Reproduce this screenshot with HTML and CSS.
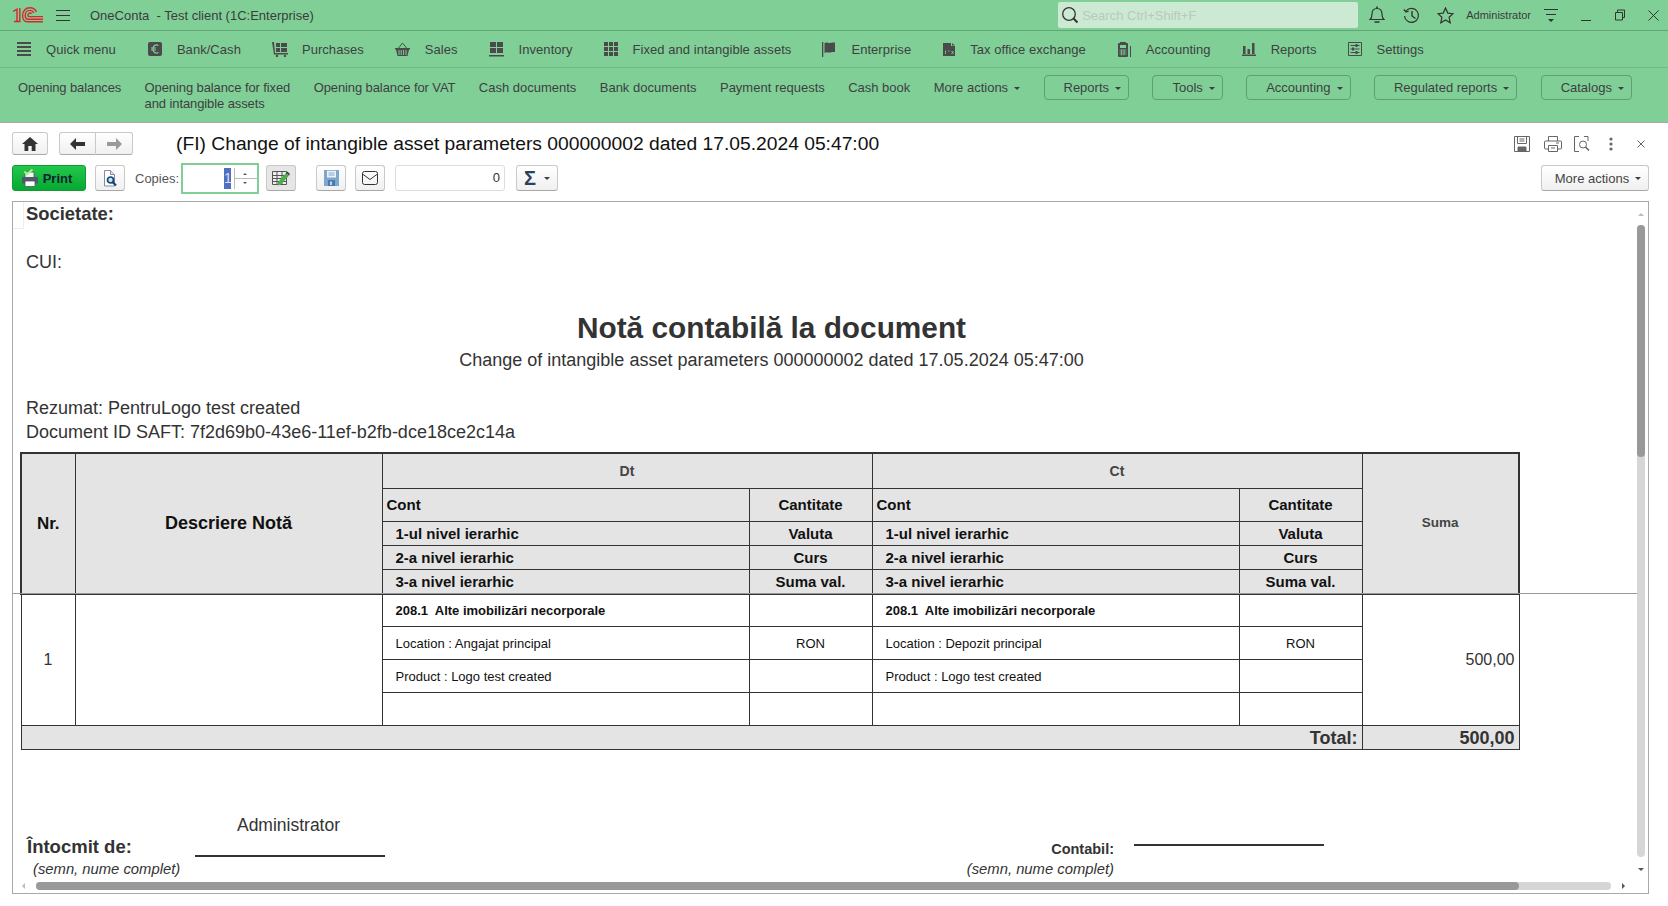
FILE: index.html
```html
<!DOCTYPE html>
<html lang="en">
<head>
  <meta charset="UTF-8" />
  <title>OneConta - Test client (1C:Enterprise)</title>
  <link rel="stylesheet" href="styles.css">
</head>
<body>

  <!-- Title bar -->
  <header class="topbar">
    <svg class="logo" width="30" height="16" viewBox="0 0 30 16" fill="none" stroke="#d8262c" stroke-width="1.4">
      <path d="M0 4.5 L4 2.2 V14.5 M6.8 1 V14.5 H1" />
      <path d="M30 14.8 H14.5 C11 14.8 9.6 11.5 9.6 8.5 C9.6 4 12.5 .8 16.8 .8 C20 .8 22.4 2.4 23.4 5" />
      <path d="M30 12.2 H15.5 C13.4 12.2 12.2 10.5 12.2 8.4 C12.2 5.5 14.2 3.4 16.8 3.4 C18.6 3.4 20 4.3 20.8 6" />
      <path d="M30 9.6 H17 C15.6 9.6 14.9 9 14.9 8.2 C14.9 6.9 15.8 6 17 6 C17.7 6 18.2 6.3 18.5 6.8" />
    </svg>
    <div class="burger"><i></i><i></i><i></i></div>
    <div class="app-title">OneConta&nbsp; - Test client (1C:Enterprise)</div>
    <div class="search">
      <svg width="18" height="20" viewBox="0 0 18 20" fill="none" stroke="#333" stroke-width="1.3"><circle cx="8" cy="9" r="6.3" /><path d="M12.5 13.5 L16.5 17.5" stroke-width="2" /></svg>
      <span>Search Ctrl+Shift+F</span>
    </div>
    <svg class="top-icon bell" width="16" height="18" viewBox="0 0 16 18" fill="none" stroke="#333" stroke-width="1.2"><path d="M1 13.5 C3 12 3 10.5 3 8 C3 4.5 5 2.5 8 2.5 C11 2.5 13 4.5 13 8 C13 10.5 13 12 15 13.5 Z" /><path d="M8 .5 V2.5 M5.5 16 H10.5" stroke-width="1.6" /></svg>
    <svg class="top-icon history" width="17" height="17" viewBox="0 0 17 17" fill="none" stroke="#333" stroke-width="1.2"><path d="M3 4 A7 7 0 1 1 1.5 9" /><path d="M.8 2.5 L3 5 L5.8 4" /><path d="M9 4 V9 L12.5 11.5" stroke-width="1.4" /></svg>
    <svg class="top-icon star" width="17" height="17" viewBox="0 0 17 17" fill="none" stroke="#333" stroke-width="1.2"><path d="M8.5 1 L10.8 6.1 L16 6.7 L12.1 10.3 L13.2 15.8 L8.5 13 L3.8 15.8 L4.9 10.3 L1 6.7 L6.2 6.1 Z" /></svg>
    <div class="user">Administrator</div>
    <svg class="top-icon funnel" width="14" height="16" viewBox="0 0 14 16" fill="#333"><path d="M0 2 H14 V3 H0 Z M2 7 H12 V8 H2 Z M4 12 H10 L7 15 Z" /></svg>
    <svg class="top-icon win-min" width="10" height="16" viewBox="0 0 10 16" fill="#333"><path d="M0 13 H10 V14 H0 Z" /></svg>
    <svg class="top-icon win-max" width="10" height="12" viewBox="0 0 10 12" fill="none" stroke="#333"><path d="M.5 3.5 H7.5 V11 H.5 Z M2.5 3.5 V1 H9.5 V8.5 H7.5" /></svg>
    <svg class="top-icon win-close" width="11" height="11" viewBox="0 0 11 11" stroke="#333"><path d="M.5 .5 L10.5 10.5 M10.5 .5 L.5 10.5" /></svg>
  </header>

  <!-- Sections -->
  <nav class="sections">
    <a class="sec sec-pad">
      <svg width="14" height="15" viewBox="0 0 14 15" fill="#4a4a4a"><path d="M0 0 H14 V2 H0 Z M0 4 H14 V6 H0 Z M0 8 H14 V10 H0 Z M0 12 H14 V14 H0 Z" /></svg>
      Quick menu
    </a>
    <a class="sec">
      <svg width="14" height="15" viewBox="0 0 14 15"><rect width="14" height="14" rx="2" fill="#4a4a4a" /><path d="M10.5 3.5 C7 2 5 4 5 7 C5 10 7 12 10.5 10.5 M3 6 H8 M3 8 H8" fill="none" stroke="#80cf97" stroke-width="1.2" /></svg>
      Bank/Cash
    </a>
    <a class="sec sec-wide">
      <svg width="16" height="15" viewBox="0 0 16 15" fill="#4a4a4a"><path d="M0 0 H2 L3 11 H16 V12.5 H2 Z" /><path d="M4 1 H8 V5 H4 Z M9 1 H15 V5 H9 Z M4 6 H8 V10 H4 Z M9 6 H15 V10 H9 Z" /><circle cx="5" cy="14" r="1.2" /><circle cx="13" cy="14" r="1.2" /></svg>
      Purchases
    </a>
    <a class="sec">
      <svg width="15" height="15" viewBox="0 0 15 15" fill="#4a4a4a"><path d="M0 6 H15 V7.5 H14 L12.5 14 H2.5 L1 7.5 H0 Z" /><path d="M3.5 6 L7.5 1 L11.5 6" fill="none" stroke="#4a4a4a" /><path d="M4 8 V13 M6.2 8 V13 M8.6 8 V13 M11 8 V13" stroke="#80cf97" /></svg>
      Sales
    </a>
    <a class="sec">
      <svg width="15" height="15" viewBox="0 0 15 15" fill="#4a4a4a"><path d="M1 0 H7 V5 H1 Z M8 0 H14 V5 H8 Z M1 6 H7 V11 H1 Z M8 6 H14 V11 H8 Z M0 13 H15 V14.5 H0 Z" /></svg>
      Inventory
    </a>
    <a class="sec">
      <svg width="14" height="15" viewBox="0 0 14 15" fill="#4a4a4a"><path d="M0 0 H4 V4 H0 Z M5 0 H9 V4 H5 Z M10 0 H14 V4 H10 Z M0 5 H4 V9 H0 Z M5 5 H9 V9 H5 Z M10 5 H14 V9 H10 Z M0 10 H4 V14 H0 Z M5 10 H9 V14 H5 Z M10 10 H14 V14 H10 Z" /></svg>
      Fixed and intangible assets
    </a>
    <a class="sec sec-pad">
      <svg width="14" height="15" viewBox="0 0 14 15" fill="#4a4a4a"><path d="M0 0 H1.3 V15 H0 Z M2.5 1 C5 -.5 6 1.5 8 1 C10 .5 11 .5 13 .5 V10 C11 10 10 10 8 10.5 C6 11 5 9.5 2.5 11 Z" /></svg>
      Enterprise
    </a>
    <a class="sec sec-pad">
      <svg width="12" height="15" viewBox="0 0 12 15" fill="#4a4a4a"><path d="M0 1 H8 L8 4 H12 V14 H0 Z M9 1 L12 3.5 H9 Z" /><path d="M2 9 H3 M2.5 9 V12 M5 9 H6.5 M8.5 9 L10.5 12 M10.5 9 L8.5 12" stroke="#80cf97" fill="none" stroke-width=".8" /></svg>
      Tax office exchange
    </a>
    <a class="sec">
      <svg width="13" height="15" viewBox="0 0 13 15" fill="#4a4a4a"><path d="M0 2 Q0 1 1 1 H2 V0 H8 V1 H9 Q10 1 10 2 V14 Q10 15 9 15 H1 Q0 15 0 14 Z M12 4 H13 V15 H12 Z" /><path d="M2 3 H8 V6 H2 Z" fill="#80cf97" /><path d="M1.5 8 H8.5 M1.5 10 H8.5 M1.5 12 H8.5 M3.5 7.5 V13.5 M6 7.5 V13.5" stroke="#80cf97" stroke-width=".7" /></svg>
      Accounting
    </a>
    <a class="sec">
      <svg width="14" height="15" viewBox="0 0 14 15" fill="#4a4a4a"><path d="M1 4 H3.5 V12 H1 Z M5.5 7 H8 V12 H5.5 Z M10 1 H12.5 V12 H10 Z M0 12.5 H14 V14 H0 Z" /></svg>
      Reports
    </a>
    <a class="sec">
      <svg width="14" height="15" viewBox="0 0 14 15" fill="none" stroke="#4a4a4a"><path d="M.5 .5 H13.5 V13.5 H.5 Z" /><path d="M2.5 3.5 H11.5 M2.5 7 H11.5 M2.5 10.5 H11.5" /><path d="M8.5 2 V5 M5 5.5 V8.5 M8.5 9 V12" stroke-width="2" /></svg>
      Settings
    </a>
  </nav>

  <!-- Commands of the section -->
  <div class="commands">
    <a class="cmd cmd-tight">Opening balances</a>
    <a class="cmd cmd-tight">Opening balance for fixed<br>and intangible assets</a>
    <a class="cmd cmd-tight">Opening balance for VAT</a>
    <a class="cmd">Cash documents</a>
    <a class="cmd">Bank documents</a>
    <a class="cmd">Payment requests</a>
    <a class="cmd">Cash book</a>
    <a class="cmd">More actions<i class="caret"></i></a>
    <button class="group">Reports<i class="caret"></i></button>
    <button class="group">Tools<i class="caret"></i></button>
    <button class="group">Accounting<i class="caret"></i></button>
    <button class="group">Regulated reports<i class="caret"></i></button>
    <button class="group">Catalogs<i class="caret"></i></button>
  </div>

  <main class="form">
    <div class="form-head">
      <button class="btn btn-home">
        <svg width="16" height="14" viewBox="0 0 16 14" fill="#333"><path d="M8 0 L16 7 H13.5 V14 H9.7 V9 H6.3 V14 H2.5 V7 H0 Z" /></svg>
      </button>
      <div class="btn-pair">
        <button class="btn">
          <svg width="15" height="12" viewBox="0 0 15 12" fill="#333"><path d="M0 6 L6 0 V4 H15 V8 H6 V12 Z" /></svg>
        </button>
        <button class="btn">
          <svg width="15" height="12" viewBox="0 0 15 12" fill="#9a9a9a"><path d="M15 6 L9 0 V4 H0 V8 H9 V12 Z" /></svg>
        </button>
      </div>
      <h1>(FI) Change of intangible asset parameters 000000002 dated 17.05.2024 05:47:00</h1>
      <div class="head-icons">
        <svg width="16" height="16" viewBox="0 0 16 16" fill="none" stroke="#666"><path d="M.5 .5 H15.5 V15.5 H.5 Z M3.5 .5 V7.5 H12.5 V.5 M5.5 3 H10.5 M5.5 5 H10.5" /><path d="M4 11 H12 V15.5 H4 Z" fill="#666" /></svg>
        <svg class="hi-print" width="18" height="16" viewBox="0 0 18 16" fill="none" stroke="#666"><path d="M4.5 5 V.5 H13.5 V5 M4.5 13 H1.5 Q.5 13 .5 12 V6 Q.5 5 1.5 5 H16.5 Q17.5 5 17.5 6 V12 Q17.5 13 16.5 13 H13.5 M4.5 9.5 H13.5 V15.5 H4.5 Z M7 12 H11 M12 7 H15" /></svg>
        <svg class="hi-preview" width="16" height="16" viewBox="0 0 16 16" fill="none" stroke="#666"><path d="M5 .5 H.5 V15.5 H5 M10 .5 H14 V5" /><circle cx="9" cy="8.5" r="3.5" /><path d="M11.5 11 L15 14.5" stroke-width="1.6" /></svg>
        <svg class="hi-dots" width="4" height="14" viewBox="0 0 4 14" fill="#666"><circle cx="2" cy="2" r="1.6" /><circle cx="2" cy="7" r="1.6" /><circle cx="2" cy="12" r="1.6" /></svg>
        <svg class="hi-x" width="8" height="8" viewBox="0 0 8 8" stroke="#666"><path d="M.5 .5 L7.5 7.5 M7.5 .5 L.5 7.5" /></svg>
      </div>
    </div>

    <div class="toolbar">
      <button class="btn btn-print">
        <svg width="16" height="18" viewBox="0 0 16 18"><path d="M3 8 V3 H12 V8" fill="#eef4f0" stroke="#556" stroke-width=".8" /><rect x="0" y="8" width="16" height="6.5" rx="1" fill="#4e5a6a" /><rect x="3" y="12" width="10" height="5.5" fill="#fff" stroke="#556" stroke-width=".8" /><path d="M2.5 2.5 L5 5.2 L10.5 0.5" fill="none" stroke="#a8f08c" stroke-width="2" /></svg>
        Print
      </button>
      <button class="btn btn-preview">
        <svg width="15" height="17" viewBox="0 0 15 17"><path d="M1.5 .5 H7.5 L11.5 4.5 V16 H1.5 Z" fill="#fff" stroke="#88a" /><path d="M7.5 .5 V4.5 H11.5" fill="#dde" stroke="#88a" /><circle cx="7.5" cy="10" r="3" fill="#bfe6f5" stroke="#14466e" stroke-width="1.7" /><path d="M9.8 12.3 L13 15.5" stroke="#14466e" stroke-width="2.2" /></svg>
      </button>
      <span class="copies-label">Copies:</span>
      <div class="copies">
        <span class="copies-val"><b>1</b></span>
        <div class="spin"><i class="up"></i><i class="down"></i></div>
      </div>
      <button class="btn btn-edit">
        <svg width="18" height="16" viewBox="0 0 18 16"><path d="M.5 1.5 H14.5 V14.5 H.5 Z" fill="#eee" /><path d="M.5 1.5 H14.5 V14.5 H.5 Z M.5 5.5 H14.5 M.5 8.5 H14.5 M.5 11.5 H14.5 M5 1.5 V14.5 M10 1.5 V14.5" fill="none" stroke="#555" /><path d="M6 12 L14 3 L17 5.5 L9 14.5 L5.5 15.5 Z" fill="#4fae4a" /><path d="M14 3 L15.5 1.5 L18 4 L17 5.5 Z" fill="#445" /></svg>
      </button>
      <button class="btn btn-save">
        <svg width="15" height="16" viewBox="0 0 15 16"><path d="M0 0 H15 V16 H0 Z" fill="#7ea6cf" /><path d="M3 .8 H12 V7.5 H3 Z" fill="#eef3f8" /><path d="M4.5 3 H10.5 M4.5 5 H10.5" stroke="#7ea6cf" /><path d="M4 10 H11 V16 H4 Z" fill="#4d7aa8" /><path d="M6 11.5 H8 V15 H6 Z" fill="#c5d6e7" /></svg>
      </button>
      <button class="btn btn-mail">
        <svg width="16" height="14" viewBox="0 0 16 14" fill="none" stroke="#333"><rect x=".5" y=".5" width="15" height="13" rx="2" /><path d="M.5 3 L8 8.5 L15.5 3" /></svg>
      </button>
      <div class="sum-field">0</div>
      <button class="btn btn-sigma"><span>Σ</span><i class="caret"></i></button>
      <button class="btn btn-more">More actions<i class="caret"></i></button>
    </div>

    <!-- Spreadsheet document -->
    <section class="report">
      <div class="corner"></div>
      <div class="line-company">Societate:</div>
      <div class="line-cui">CUI:</div>
      <h2>Notă contabilă la document</h2>
      <div class="doc-name">Change of intangible asset parameters 000000002 dated 17.05.2024 05:47:00</div>
      <div class="doc-meta">Rezumat: PentruLogo test created</div>
      <div class="doc-meta">Document ID SAFT: 7f2d69b0-43e6-11ef-b2fb-dce18ce2c14a</div>

      <table class="note">
        <colgroup>
          <col class="c-nr"><col class="c-desc"><col class="c-acc"><col class="c-qty"><col class="c-acc"><col class="c-qty"><col class="c-sum">
        </colgroup>
        <thead>
          <tr class="r35">
            <th rowspan="5" class="big nr">Nr.</th>
            <th rowspan="5" class="big">Descriere Notă</th>
            <th colspan="2" class="dim">Dt</th>
            <th colspan="2" class="dim">Ct</th>
            <th rowspan="5" class="dim suma">Suma</th>
          </tr>
          <tr class="r33">
            <th class="left">Cont</th><th>Cantitate</th>
            <th class="left">Cont</th><th>Cantitate</th>
          </tr>
          <tr class="r24">
            <th class="ind">1-ul nivel ierarhic</th><th>Valuta</th>
            <th class="ind">1-ul nivel ierarhic</th><th>Valuta</th>
          </tr>
          <tr class="r24">
            <th class="ind">2-a nivel ierarhic</th><th>Curs</th>
            <th class="ind">2-a nivel ierarhic</th><th>Curs</th>
          </tr>
          <tr class="r25">
            <th class="ind">3-a nivel ierarhic</th><th>Suma val.</th>
            <th class="ind">3-a nivel ierarhic</th><th>Suma val.</th>
          </tr>
        </thead>
        <tbody>
          <tr class="r32">
            <td rowspan="4" class="num">1</td>
            <td rowspan="4"></td>
            <td class="ind acc">208.1&nbsp; Alte imobilizări necorporale</td><td></td>
            <td class="ind acc">208.1&nbsp; Alte imobilizări necorporale</td><td></td>
            <td rowspan="4" class="money">500,00</td>
          </tr>
          <tr class="r33 plain">
            <td class="ind">Location : Angajat principal</td><td class="cur">RON</td>
            <td class="ind">Location : Depozit principal</td><td class="cur">RON</td>
          </tr>
          <tr class="r33 plain">
            <td class="ind">Product : Logo test created</td><td></td>
            <td class="ind">Product : Logo test created</td><td></td>
          </tr>
          <tr class="r33"><td></td><td></td><td></td><td></td></tr>
          <tr class="r24 total">
            <td colspan="6">Total:</td>
            <td>500,00</td>
          </tr>
        </tbody>
      </table>

      <div class="sign">
        <div class="sign-left">
          <div class="sign-name">Administrator</div>
          <div class="sign-label">Întocmit de:</div>
          <div class="sign-rule"></div>
          <div class="sign-hint">(semn, nume complet)</div>
        </div>
        <div class="sign-right">
          <div class="sign-acc">Contabil:</div>
          <div class="sign-rule"></div>
          <div class="sign-hint">(semn, nume complet)</div>
        </div>
      </div>

      <div class="freeze-line"></div>
      <div class="vbar"><i class="thumb"></i></div>
      <i class="arrow a-up"></i>
      <i class="arrow a-down"></i>
      <div class="hbar"><i class="thumb"></i></div>
      <i class="arrow a-left"></i>
      <i class="arrow a-right"></i>
    </section>
  </main>

</body>
</html>
```

FILE: styles.css
```css
* {
  box-sizing: border-box;
}
body {
  margin: 0;
  width: 1668px;
  height: 906px;
  overflow: hidden;
  background: #fff;
  color: #333;
  font-family: "Liberation Sans", Arial, sans-serif;
  font-size: 13px;
}
svg {
  display: block;
  flex: none;
}
button {
  font-family: inherit;
  font-size: inherit;
  color: inherit;
  cursor: pointer;
}

/* Title bar */
.topbar {
  display: flex;
  align-items: center;
  height: 31px;
  background: #80cf97;
  border-bottom: 1px solid #5fa676;
  padding: 0 9px 0 13px;
}
.burger {
  width: 14px;
  margin-left: 13px;
}
.burger i {
  display: block;
  height: 1px;
  background: #333;
  margin: 4px 0;
}
.app-title {
  margin-left: 20px;
  flex: 1;
  color: #3c3c3c;
}
.search {
  display: flex;
  align-items: center;
  gap: 3px;
  width: 300px;
  height: 26px;
  padding-left: 3px;
  background: #cbe9d3;
  border-radius: 2px;
  color: #b9c9bd;
}
.bell {
  margin-left: 11px;
}
.history {
  margin-left: 18px;
}
.star {
  margin-left: 17px;
}
.user {
  margin-left: 12px;
  font-size: 11px;
  color: #3c3c3c;
}
.funnel {
  margin-left: 13px;
}
.win-min {
  margin-left: 23px;
}
.win-max {
  margin-left: 24px;
}
.win-close {
  margin-left: 23px;
}

/* Sections */
.sections {
  display: flex;
  align-items: center;
  gap: 31px;
  height: 37px;
  padding-left: 17px;
  background: #80cf97;
  border-bottom: 1px solid #6fb888;
  color: #3f3f3f;
  letter-spacing: .05px;
}
.sec {
  display: flex;
  align-items: center;
  gap: 15px;
}
.sec-wide {
  gap: 14px;
}
.sec-pad {
  margin-right: 1px;
}
.commands {
  display: flex;
  align-items: flex-start;
  gap: 23.4px;
  height: 55px;
  padding: 7px 0 0 18px;
  background: #80cf97;
  border-bottom: 1px solid #a9a9a9;
  color: #3f3f3f;
  line-height: 16px;
}
.cmd {
  padding-top: 5px;
}
.cmd-tight {
  letter-spacing: -.1px;
}
.group {
  height: 25px;
  padding: 0 7px 0 19px;
  background: transparent;
  border: 1px solid #5f9f73;
  border-radius: 4px;
}
.caret {
  display: inline-block;
  margin-left: 6px;
  vertical-align: middle;
  border-left: 3px solid transparent;
  border-right: 3px solid transparent;
  border-top: 3px solid #3f3f3f;
}

/* Form */
.form {
  padding: 9px 19px 0 12px;
}
.form-head {
  display: flex;
  align-items: center;
  height: 23px;
}
.btn {
  display: flex;
  align-items: center;
  justify-content: center;
  height: 26px;
  padding: 0;
  background: linear-gradient(#fff, #f0f0f0);
  border: 1px solid #c9c9c9;
  border-bottom-color: #a8a8a8;
  border-radius: 3px;
}
.form-head .btn {
  height: 23px;
}
.btn-home {
  width: 36px;
}
.btn-pair {
  display: flex;
  margin-left: 11px;
}
.btn-pair .btn {
  width: 37px;
}
.btn-pair .btn:first-child {
  border-radius: 3px 0 0 3px;
}
.btn-pair .btn:last-child {
  border-left: 0;
  border-radius: 0 3px 3px 0;
}
h1 {
  margin: 0 0 0 43px;
  padding-top: 1px;
  flex: 1;
  font-size: 19.25px;
  font-weight: normal;
  color: #111;
}
.head-icons {
  display: flex;
  align-items: center;
  margin-right: 4px;
}
.hi-print {
  margin-left: 14px;
}
.hi-preview {
  margin-left: 12px;
}
.hi-dots {
  margin-left: 19px;
}
.hi-x {
  margin-left: 24px;
}
.toolbar {
  display: flex;
  align-items: center;
  height: 26px;
  margin-top: 10px;
}
.btn-print {
  gap: 5px;
  width: 74px;
  padding-right: 4px;
  background: linear-gradient(#22c84a, #05a832);
  border-color: #109a30;
  font-weight: bold;
  color: #123;
}
.btn-preview {
  width: 30px;
  margin-left: 9px;
}
.copies-label {
  margin-left: 10px;
  width: 46px;
  color: #555;
}
.copies {
  display: flex;
  align-items: stretch;
  width: 78px;
  height: 31px;
  border: 2px solid #80cf97;
  padding: 3px 0;
}
.copies-val {
  flex: 1;
  text-align: right;
  line-height: 21px;
  padding-right: 3px;
  font-size: 14px;
}
.copies-val b {
  display: inline-block;
  width: 7px;
  font-weight: normal;
  text-align: center;
  background: #4f6fc0;
  color: #dde;
}
.spin {
  position: relative;
  width: 23px;
  border-left: 1px solid #bbb;
}
.spin::after {
  content: "";
  position: absolute;
  left: 0;
  right: 0;
  top: 50%;
  border-top: 1px solid #bbb;
}
.spin i {
  position: absolute;
  left: 8px;
  border-left: 2px solid transparent;
  border-right: 2px solid transparent;
}
.spin .up {
  top: 5px;
  border-bottom: 2px solid #555;
}
.spin .down {
  bottom: 5px;
  border-top: 2px solid #555;
}
.btn-edit {
  width: 30px;
  margin-left: 7px;
  background: #e6e6e6;
}
.btn-save {
  width: 30px;
  margin-left: 20px;
}
.btn-mail {
  width: 30px;
  margin-left: 9px;
}
.sum-field {
  width: 110px;
  height: 26px;
  margin-left: 10px;
  padding-right: 4px;
  border: 1px solid #ddd;
  border-radius: 3px;
  text-align: right;
  line-height: 24px;
}
.btn-sigma {
  width: 42px;
  margin-left: 11px;
  gap: 2px;
}
.btn-sigma span {
  font-size: 20px;
  font-weight: bold;
  color: #2b4258;
}
.btn-more {
  width: 108px;
  padding-left: 6px;
  margin-left: auto;
  color: #444;
}

/* Spreadsheet */
.report {
  position: relative;
  width: 1637px;
  height: 693px;
  margin-top: 10px;
  border: 1px solid #a9a9a9;
  overflow: hidden;
  font-size: 18px;
}
.corner {
  position: absolute;
  left: 0;
  top: 0;
  width: 11px;
  height: 27px;
  border: 1px solid #eee;
  border-width: 0 1px 1px 0;
}
.line-company {
  height: 24px;
  padding-left: 13px;
  font-size: 18.4px;
  line-height: 24px;
  font-weight: bold;
}
.line-cui {
  height: 24px;
  margin-top: 24px;
  padding-left: 13px;
  line-height: 24px;
}
h2 {
  margin: 37px 0 0;
  width: 1517px;
  font-size: 29.8px;
  line-height: 34px;
  text-align: center;
}
.doc-name {
  width: 1517px;
  margin-top: 4px;
  line-height: 22px;
  text-align: center;
}
.doc-meta {
  padding-left: 13px;
  line-height: 24px;
}
.doc-name + .doc-meta {
  margin-top: 25px;
}

/* Account table */
.note {
  width: 1499px;
  margin: 8px 0 0 7px;
  border-collapse: collapse;
  table-layout: fixed;
  color: #111;
  font-size: 13px;
}
.c-nr { width: 54px; }
.c-desc { width: 307px; }
.c-acc { width: 367px; }
.c-qty { width: 123px; }
.c-sum { width: 157px; }
.note th,
.note td {
  padding: 0;
  border: 1px solid #333;
}
.note th {
  background: #e4e4e4;
  font-size: 15px;
  text-align: center;
}
.note thead {
  border: 2px solid #333;
}
.note .big {
  font-size: 18px;
}
.note .nr {
  font-size: 17px;
}
.note .dim {
  font-size: 14px;
  color: #444;
}
.note .suma {
  padding-bottom: 2px;
  font-size: 13.5px;
}
.note .left {
  text-align: left;
  padding-left: 4px;
}
.note .ind {
  text-align: left;
  padding-left: 13px;
}
.r35 { height: 35px; }
.r33 { height: 33px; }
.r32 { height: 32px; }
.r25 { height: 25px; }
.r24 { height: 24px; }
.note .acc {
  font-weight: bold;
}
.note .plain td {
  padding-top: 2px;
}
.note .num {
  text-align: center;
  font-size: 16px;
  color: #333;
}
.note .cur {
  text-align: center;
}
.note .money {
  text-align: right;
  padding-right: 4px;
  font-size: 16px;
  color: #333;
}
.note .total td {
  padding: 2px 4px 0 0;
  background: #e4e4e4;
  text-align: right;
  font-size: 18px;
  font-weight: bold;
  color: #333;
}

/* Signatures */
.sign {
  display: flex;
  margin-top: 63px;
}
.sign-left {
  display: grid;
  grid-template-columns: 182px 190px;
  grid-template-rows: 24px 20px 22px;
}
.sign-name {
  grid-column: 2;
  padding-right: 3px;
  text-align: center;
  font-size: 17.5px;
  line-height: 24px;
}
.sign-label {
  grid-row: 2;
  padding-left: 14px;
  font-size: 18.5px;
  font-weight: bold;
  line-height: 20px;
}
.sign-left .sign-rule {
  grid-row: 2;
  border-bottom: 2px solid #333;
}
.sign-hint {
  font-size: 14.8px;
  font-style: italic;
  line-height: 22px;
}
.sign-left .sign-hint {
  grid-column: 1 / 3;
  padding: 1px 0 0 20px;
}
.sign-right {
  display: grid;
  grid-template-columns: 729px 190px;
  grid-template-rows: 20px 22px;
  column-gap: 20px;
  margin-top: 25px;
  text-align: right;
}
.sign-acc {
  font-size: 14.5px;
  font-weight: bold;
  line-height: 22px;
}
.sign-right .sign-rule {
  height: 8px;
  border-bottom: 2px solid #333;
}

/* Overlays on the sheet */
.freeze-line {
  position: absolute;
  left: 0;
  top: 391px;
  width: 1624px;
  border-top: 1px solid #999;
}
.vbar {
  position: absolute;
  left: 1624px;
  top: 23px;
  width: 8px;
  height: 632px;
  border-radius: 4px;
  background: #d6d6d6;
}
.vbar .thumb {
  display: block;
  width: 8px;
  height: 232px;
  border-radius: 4px;
  background: #999;
}
.hbar {
  position: absolute;
  left: 23px;
  top: 680px;
  width: 1575px;
  height: 8px;
  border-radius: 4px;
  background: #d6d6d6;
}
.hbar .thumb {
  display: block;
  width: 1483px;
  height: 8px;
  border-radius: 4px;
  background: #999;
}
.arrow {
  position: absolute;
  width: 0;
  height: 0;
  border: 3px solid transparent;
}
.a-up {
  left: 1625px;
  top: 8px;
  border-bottom-color: #bbb;
}
.a-down {
  left: 1625px;
  top: 666px;
  border-top-color: #555;
}
.a-left {
  left: 6px;
  top: 681px;
  border-right-color: #bbb;
}
.a-right {
  left: 1609px;
  top: 681px;
  border-left-color: #555;
}
```
